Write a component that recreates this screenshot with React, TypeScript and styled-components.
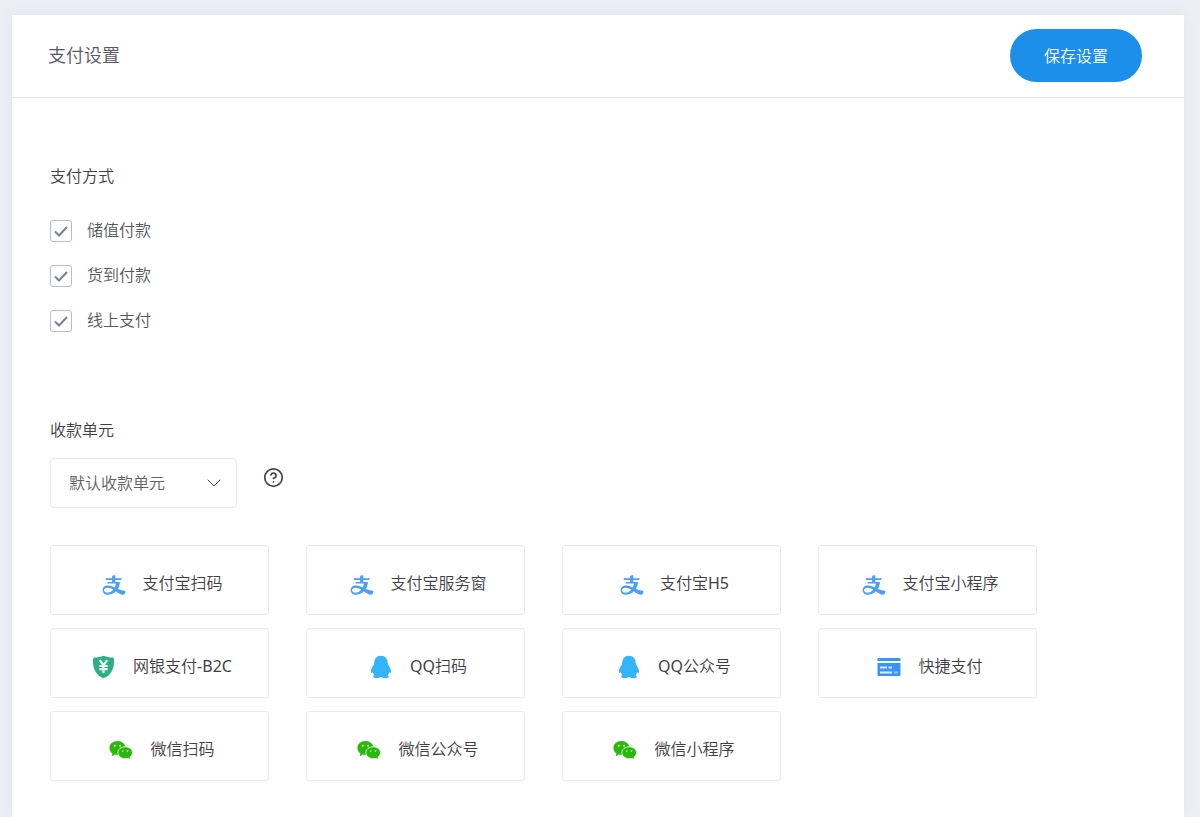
import React from 'react';
import styled, { createGlobalStyle } from 'styled-components';
import { ChevronDown, CircleQuestionMark } from 'lucide-react';
import { AiOutlineAlipay } from 'react-icons/ai';

const GlobalStyle = createGlobalStyle`
  *, *::before, *::after { box-sizing: border-box; }
  body {
    margin: 0;
    background: #eeeff5;
    color: #3f4045;
    font-family: "Noto Sans", "Noto Sans CJK SC DemiLight", "Noto Sans CJK SC", sans-serif;
    font-size: 16px;
    font-weight: 400;
    line-height: 24px;
  }
  button, select, input { font: inherit; }
`;

const Page = styled.main`
  display: flex;
  flex-direction: column;
  min-height: 100vh;
  padding: 15px 16px 0 12px;
`;

const Panel = styled.form`
  flex: 1;
  background: #fff;
  box-shadow: 0 0 12px rgba(90, 100, 130, 0.08);
`;

const Header = styled.header`
  display: flex;
  align-items: center;
  justify-content: space-between;
  height: 83px;
  padding: 0 42px 2px 36px;
  border-bottom: 1px solid #e8e9ed;
`;

const Title = styled.h1`
  margin: 0;
  color: #55585e;
  font-size: 18px;
  font-weight: inherit;
`;

const SaveButton = styled.button`
  width: 132px;
  height: 53px;
  padding: 2px 0 0;
  border: 0;
  border-radius: 27px;
  background: #1c8fea;
  color: #fff;
  cursor: pointer;
`;

const Body = styled.div`
  padding: 66px 147px 36px 38px;
`;

const Section = styled.section`
  & + & { margin-top: 86px; }
`;

const SectionTitle = styled.h2`
  margin: 0;
  font-size: 16px;
  font-weight: inherit;
`;

const Methods = styled.div`
  display: flex;
  flex-direction: column;
  align-items: flex-start;
  gap: 21px;
  margin-top: 30px;
`;

const MethodLabel = styled.label`
  display: flex;
  align-items: center;
  gap: 15px;
  height: 24px;
  color: #55575c;
  cursor: pointer;
`;

const TickBox = styled.span`
  display: grid;
  width: 22px;
  height: 22px;
  margin-top: 2px;
  place-items: center;

  > * { grid-area: 1 / 1; }
  input:not(:checked) + svg { visibility: hidden; }
`;

const TickInput = styled.input`
  appearance: none;
  width: 22px;
  height: 22px;
  margin: 0;
  border: 1px solid #b9bdcb;
  border-radius: 3px;
  background: #fff;
`;

const TickMark = styled.svg`
  width: 14px;
  height: 12px;
  pointer-events: none;
`;

const UnitRow = styled.div`
  display: flex;
  gap: 26px;
  margin-top: 16px;
`;

const SelectBox = styled.div`
  display: grid;
  width: 187px;
  height: 50px;
  align-items: center;

  > * { grid-area: 1 / 1; }
  svg {
    justify-self: end;
    margin-right: 11px;
    color: #45474c;
    pointer-events: none;
  }
`;

const Select = styled.select`
  appearance: none;
  width: 100%;
  height: 100%;
  padding: 0 40px 0 18px;
  border: 1px solid #e9e9ed;
  border-radius: 4px;
  background: #fff;
  color: #606266;
`;

const HelpButton = styled.button`
  display: flex;
  width: 21px;
  height: 21px;
  margin-top: 9px;
  padding: 0;
  border: 0;
  background: none;
  color: #45464c;
  cursor: pointer;
`;

const Channels = styled.ul`
  display: grid;
  grid-template-columns: repeat(4, minmax(0, 1fr));
  gap: 13px 37px;
  margin: 37px 0 0;
  padding: 0;
  list-style: none;
`;

const Channel = styled.li`
  display: flex;
  align-items: center;
  justify-content: center;
  gap: 17px;
  height: 70px;
  padding: 6px 0 0 5px;
  border: 1px solid #ebebef;
  border-radius: 3px;
  white-space: nowrap;
`;

const IconSlot = styled.span<{ $color: string }>`
  display: grid;
  width: 24px;
  height: 24px;
  margin-top: 1px;
  place-items: center;
  color: ${(p) => p.$color};
`;

const Glyph = ({ children }: { children: React.ReactNode }) => (
  <svg width="24" height="24" viewBox="0 0 24 24" fill="currentColor" aria-hidden="true">
    {children}
  </svg>
);

const ShieldIcon = () => (
  <Glyph>
    <path d="M11.500 .8C14.500 2.100 18 2.700 20.600 2.600Q22 2.700 22 4.500C22.300 9 21.500 13.500 19.300 17 17.500 20 14.500 22.300 11.500 23.200 8.500 22.300 5.500 20 3.700 17 1.500 13.500.7 9 1 4.500Q1 2.700 2.400 2.600C5 2.700 8.500 2.100 11.500.8Z" />
    <path d="M7.800 5.200l3.700 5 3.700-5M11.500 10v8M7.300 11h8.400M7.300 14.200h8.400" fill="none" stroke="#f0fbf7" strokeWidth="2.200" />
  </Glyph>
);

const PenguinIcon = () => (
  <Glyph>
    <path d="M12 .8C16.300.8 18.600 3.900 18.700 7.600 18.700 8.700 19.100 9.700 19.700 10.600 21 12.700 22.200 14.800 22 17.200 21.900 18.100 21.100 18.200 20.300 17 20 18.300 19.500 19.200 18.700 20 20.300 20.700 20 22.800 18 23 15.900 23.300 13.700 23.100 12 22.100 10.300 23.100 8.100 23.300 6 23 4 22.800 3.700 20.700 5.300 20 4.500 19.200 4 18.300 3.700 17 2.900 18.200 2.100 18.100 2 17.200 1.800 14.800 3 12.700 4.300 10.600 4.900 9.700 5.300 8.700 5.300 7.600 5.400 3.900 7.700.8 12 .8Z" />
  </Glyph>
);

const CardIcon = () => (
  <Glyph>
    <path d="M1.500 3h21a1 1 0 0 1 1 1v2H.5V4a1 1 0 0 1 1-1ZM.5 8h23v12a1 1 0 0 1-1 1h-21a1 1 0 0 1-1-1Z" />
    <path d="M3 12.500h7M11.500 12.500h3.500M3 17.500h12" stroke="#dcecff" strokeWidth="2.200" />
    <path d="M17 17.500h4" stroke="#8cc2fb" strokeWidth="2.200" />
  </Glyph>
);

const WechatIcon = () => (
  <Glyph>
    <path d="M8.500 3C13 3 16.500 6 16.500 10S13 17 8.500 17C7.500 17 6.600 16.900 5.700 16.600L2.700 18.400 3.400 15.500C1.500 14.200.4 12.200.4 10 .4 6 4 3 8.500 3Z" />
    <path d="M16.200 8.800C20.300 8.800 23.500 11.400 23.500 14.700 23.500 16.600 22.500 18.200 21 19.300L21.600 21.800 19 20.300C18.100 20.500 17.200 20.700 16.200 20.700 12.100 20.700 8.900 18 8.900 14.700S12.100 8.800 16.200 8.800Z" stroke="#fff" strokeWidth=".8" />
    <g fill="#d8f5d0">
      <circle cx="5.800" cy="7.800" r="1" />
      <circle cx="11" cy="7.800" r="1" />
      <circle cx="13.800" cy="13" r=".8" />
      <circle cx="18.600" cy="13" r=".8" />
    </g>
  </Glyph>
);

type Kind = 'alipay' | 'bank' | 'qq' | 'card' | 'wechat';

const icons: Record<Kind, { color: string; node: React.ReactNode }> = {
  alipay: { color: '#4a9ff8', node: <AiOutlineAlipay size={26} /> },
  bank: { color: '#2cb083', node: <ShieldIcon /> },
  qq: { color: '#33b4fd', node: <PenguinIcon /> },
  card: { color: '#3a94f7', node: <CardIcon /> },
  wechat: { color: '#2bb80c', node: <WechatIcon /> },
};

const channels: { kind: Kind; name: string }[] = [
  { kind: 'alipay', name: '支付宝扫码' },
  { kind: 'alipay', name: '支付宝服务窗' },
  { kind: 'alipay', name: '支付宝H5' },
  { kind: 'alipay', name: '支付宝小程序' },
  { kind: 'bank', name: '网银支付-B2C' },
  { kind: 'qq', name: 'QQ扫码' },
  { kind: 'qq', name: 'QQ公众号' },
  { kind: 'card', name: '快捷支付' },
  { kind: 'wechat', name: '微信扫码' },
  { kind: 'wechat', name: '微信公众号' },
  { kind: 'wechat', name: '微信小程序' },
];

const methods = ['储值付款', '货到付款', '线上支付'];

export default function App() {
  return (
    <>
      <GlobalStyle />
      <Page>
        <Panel onSubmit={(e) => e.preventDefault()}>
          <Header>
            <Title>支付设置</Title>
            <SaveButton type="submit">保存设置</SaveButton>
          </Header>
          <Body>
            <Section>
              <SectionTitle>支付方式</SectionTitle>
              <Methods>
                {methods.map((name) => (
                  <MethodLabel key={name}>
                    <TickBox>
                      <TickInput type="checkbox" defaultChecked />
                      <TickMark viewBox="0 0 14 12" aria-hidden="true">
                        <path d="M1 6.500l4 4L13 2" fill="none" stroke="#75819f" strokeWidth="2" />
                      </TickMark>
                    </TickBox>
                    {name}
                  </MethodLabel>
                ))}
              </Methods>
            </Section>
            <Section>
              <SectionTitle as="label" htmlFor="unit">收款单元</SectionTitle>
              <UnitRow>
                <SelectBox>
                  <Select id="unit">
                    <option>默认收款单元</option>
                  </Select>
                  <ChevronDown size={24} strokeWidth={1} aria-hidden="true" />
                </SelectBox>
                <HelpButton type="button" aria-label="?">
                  <CircleQuestionMark size={21} strokeWidth={2} />
                </HelpButton>
              </UnitRow>
              <Channels>
                {channels.map(({ kind, name }) => (
                  <Channel key={name}>
                    <IconSlot $color={icons[kind].color}>{icons[kind].node}</IconSlot>
                    {name}
                  </Channel>
                ))}
              </Channels>
            </Section>
          </Body>
        </Panel>
      </Page>
    </>
  );
}
